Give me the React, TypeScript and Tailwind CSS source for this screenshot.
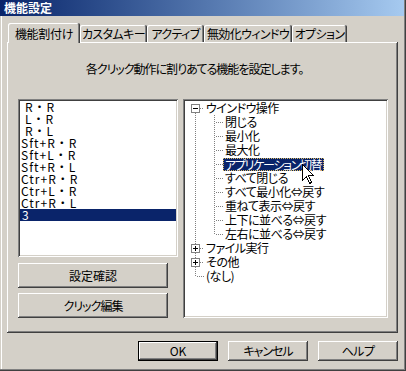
import React from "react";

const raised =
  "shadow-[inset_-1px_-1px_#404040,inset_1px_1px_#ffffff,inset_-2px_-2px_#808080,inset_2px_2px_#d4d0c8]";
const sunken =
  "shadow-[inset_1px_1px_#808080,inset_-1px_-1px_#ffffff,inset_2px_2px_#404040,inset_-2px_-2px_#d4d0c8]";

const listItems = [
  { t: "R・R", indent: true },
  { t: "L・R", indent: true },
  { t: "R・L", indent: true },
  { t: "Sft+R・R" },
  { t: "Sft+L・R" },
  { t: "Sft+R・L" },
  { t: "Ctr+R・R" },
  { t: "Ctr+L・R" },
  { t: "Ctr+R・L" },
  { t: "3", selected: true },
];

type TreeRow = {
  text: string;
  level: 0 | 1;
  box?: "minus" | "plus";
  first?: boolean;
  last?: boolean;
  selected?: boolean;
};

const children = [
  "閉じる",
  "最小化",
  "最大化",
  "アプリケーション切替",
  "すべて閉じる",
  "すべて最小化⇔戻す",
  "重ねて表示⇔戻す",
  "上下に並べる⇔戻す",
  "左右に並べる⇔戻す",
];

const treeRows: TreeRow[] = [
  { text: "ウインドウ操作", level: 0, box: "minus", first: true },
  ...children.map((c, i) => ({
    text: c,
    level: 1 as const,
    last: i === children.length - 1,
    selected: i === 3,
  })),
  { text: "ファイル実行", level: 0, box: "plus" },
  { text: "その他", level: 0, box: "plus" },
  { text: "(なし)", level: 0, last: true },
];

function Connector({ row }: { row: TreeRow }) {
  const dot = { stroke: "#808080", strokeWidth: 1, strokeDasharray: "1 1" };
  if (row.level === 1) {
    return (
      <svg width="38" height="14" className="shrink-0" shapeRendering="crispEdges">
        <line x1="10.5" y1="0" x2="10.5" y2="14" {...dot} />
        <line x1="29.5" y1="0" x2="29.5" y2={row.last ? 8 : 14} {...dot} />
        <line x1="31" y1="7.5" x2="38" y2="7.5" {...dot} />
      </svg>
    );
  }
  return (
    <svg width="19" height="14" className="shrink-0" shapeRendering="crispEdges">
      <line
        x1="10.5"
        y1={row.first ? 12 : 0}
        x2="10.5"
        y2={row.last ? 8 : 14}
        {...dot}
      />
      <line x1={row.box ? 15 : 12} y1="7.5" x2="19" y2="7.5" {...dot} />
      {row.box && (
        <>
          <rect x="6.5" y="3.5" width="8" height="8" fill="#ffffff" stroke="#808080" />
          <line x1="8" y1="7.5" x2="13" y2="7.5" stroke="#000000" />
          {row.box === "plus" && (
            <line x1="10.5" y1="5" x2="10.5" y2="10" stroke="#000000" />
          )}
        </>
      )}
    </svg>
  );
}

function Tab({ label, w, selected }: { label: string; w: number; selected?: boolean }) {
  if (selected) {
    return (
      <div
        className="relative z-10 mb-[-1px] h-[20px] shrink-0 rounded-tl-[2px] rounded-tr-[2px] bg-[#d4d0c8] shadow-[inset_-1px_0_#404040,inset_1px_1px_#ffffff,inset_-2px_0_#808080] flex items-start justify-center pt-[5px] tracking-[-0.3px]"
        style={{ width: w }}
      >
        {label}
      </div>
    );
  }
  return (
    <div
      className="h-[17px] shrink-0 rounded-tl-[2px] rounded-tr-[2px] bg-[#d4d0c8] shadow-[inset_-1px_0_#404040,inset_1px_1px_#ffffff,inset_-2px_0_#808080] flex items-start justify-center pt-[3px] tracking-[-0.6px]"
      style={{ width: w }}
    >
      {label}
    </div>
  );
}

export default function App() {
  return (
    <div className="relative w-[406px] h-[371px] overflow-hidden bg-[#d4d0c8] text-black text-[12px] leading-[12px] font-['Noto_Sans_CJK_JP',sans-serif] [font-feature-settings:'palt'] shadow-[inset_-1px_-1px_#404040,inset_-2px_-2px_#808080,inset_1px_0_#d4d0c8,inset_2px_0_#ffffff]">
      {/* Title bar */}
      <div className="h-[16px] mr-[2px] bg-linear-to-r from-[#0a246a] to-[#a6caf0] flex items-center pl-[4px] text-white font-bold">
        機能設定
      </div>

      {/* Tabs */}
      <div className="mt-[7px] ml-[8px] h-[19px] flex items-end">
        <Tab label="機能割付け" w={72} selected />
        <Tab label="カスタムキー" w={67} />
        <Tab label="アクティブ" w={57} />
        <Tab label="無効化ウィンドウ" w={88} />
        <Tab label="オプション" w={55} />
      </div>

      {/* Panel */}
      <div className="ml-[7px] w-[391px] h-[291px] shadow-[inset_-1px_-1px_#404040,inset_1px_1px_#ffffff,inset_-2px_-2px_#808080]">
        <div className="pt-[21px] h-[33px] text-center pr-[16px] tracking-[-1px]">
          各クリック動作に割りあてる機能を設定します。
        </div>
        <div className="mt-[24px] ml-[11px] flex gap-[5px]">
          <div className="w-[160px] flex flex-col">
            <div className={`${sunken} bg-white h-[158px] p-[2px] [font-feature-settings:normal] tracking-[1px]`}>
              {listItems.map((it, i) => (
                <div
                  key={i}
                  className={`h-[12px] leading-[12px] whitespace-nowrap ${
                    it.selected ? "bg-[#0a246a] text-white pl-[2px]" : it.indent ? "pl-[5px]" : "pl-[1px]"
                  }`}
                >
                  {it.t}
                </div>
              ))}
            </div>
            <div
              className={`${raised} mt-[6px] w-[150px] h-[25px] flex items-center justify-center`}
            >
              設定確認
            </div>
            <div
              className={`${raised} mt-[5px] w-[150px] h-[25px] flex items-center justify-center tracking-[-1px]`}
            >
              クリック編集
            </div>
          </div>
          <div className={`${sunken} bg-white w-[205px] h-[219px] p-[2px] tracking-[-0.5px]`}>
            {treeRows.map((r, i) => (
              <div key={i} className="h-[14px] flex items-center whitespace-nowrap">
                <Connector row={r} />
                {r.selected ? (
                  <span className="h-[13px] leading-[11px] px-[1px] bg-[#0a246a] text-white border border-dotted border-[#d8b860] tracking-[-1.3px]">
                    {r.text}
                  </span>
                ) : (
                  <span className="px-[2px] leading-[12px]">{r.text}</span>
                )}
              </div>
            ))}
          </div>
        </div>
      </div>

      {/* Bottom buttons */}
      <div className="mt-[8px] pr-[8px] flex justify-end gap-[10px]">
        <div className="w-[80px] h-[20px] flex items-center justify-center shadow-[inset_0_0_0_1px_#000000,inset_-2px_-2px_#404040,inset_2px_2px_#ffffff,inset_-3px_-3px_#808080,inset_3px_3px_#d4d0c8]">
          OK
        </div>
        <div className={`${raised} w-[80px] h-[20px] flex items-center justify-center tracking-[-1px]`}>
          キャンセル
        </div>
        <div className={`${raised} w-[80px] h-[20px] flex items-center justify-center tracking-[-0.5px]`}>
          ヘルプ
        </div>
      </div>

      {/* Mouse cursor */}
      <svg
        className="absolute left-[302px] top-[164px]"
        width="13"
        height="21"
        shapeRendering="crispEdges"
      >
        <path
          d="M0.5 0.5 L0.5 16.5 L4.5 12.5 L7.5 19.5 L9.5 18.5 L6.5 11.5 L11.5 11.5 Z"
          fill="#ffffff"
          stroke="#000000"
        />
      </svg>
    </div>
  );
}
